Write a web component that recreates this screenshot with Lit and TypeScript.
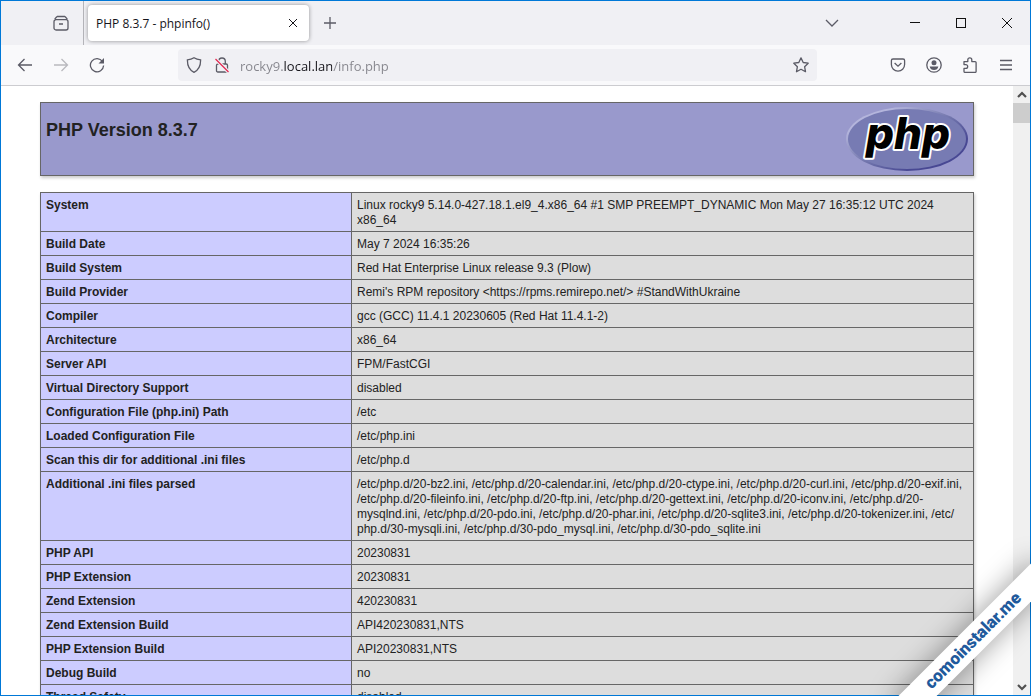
import { LitElement, html, css, svg } from "lit";
import { customElement } from "lit/decorators.js";

const ICONS = {
  archive: svg`<path d="M4 1.500h8M3 4.700h10a2 2 0 0 1 2 2V13a2 2 0 0 1-2 2H3a2 2 0 0 1-2-2V6.700a2 2 0 0 1 2-2zM1.700 4.200 4 1.500M14.300 4.200 12 1.500M6 9h4"/>`,
  close: svg`<path d="m4 4 8 8M12 4l-8 8" stroke-width="1"/>`,
  plus: svg`<path d="M8 2v12M2 8h12"/>`,
  chevron: svg`<path d="m2 5 6 6 6-6"/>`,
  minimize: svg`<path d="M3 7.500h10" shape-rendering="crispEdges"/>`,
  maximize: svg`<path d="M3.500 3.500h9v9h-9z" shape-rendering="crispEdges"/>`,
  closeWindow: svg`<path d="m3 3 10 10M13 3 3 13"/>`,
  back: svg`<path d="M15 8H1.500M7.500 2 1.500 8l6 6"/>`,
  forward: svg`<path d="M1 8h13.500M8.500 2l6 6-6 6"/>`,
  reload: svg`<path d="M13.500 4.500A6.600 6.600 0 1 0 14.600 8.500"/><path d="M15 1v5.500H9.500z" fill="currentColor" stroke="none"/>`,
  shield: svg`<path d="M8 .8c2 1.300 4.300 1.900 6.600 2.100C14.700 8.500 13 13 8 15.300 3 13 1.300 8.500 1.400 2.900 3.700 2.700 6 2.100 8 .8z"/>`,
  lock: svg`<path d="M4.700 7V4.300a3.300 3.300 0 0 1 6.600 0V7M3.800 7h8.400a1.300 1.300 0 0 1 1.300 1.300V13.700a1.300 1.300 0 0 1-1.300 1.300H3.800a1.300 1.300 0 0 1-1.300-1.300V8.300A1.300 1.300 0 0 1 3.800 7z"/><path d="m1.500 2 13 13" stroke="#f0f0f4" stroke-width="3.500"/><path d="m1.500 2 13 13" stroke="#e22850"/>`,
  star: svg`<path d="m8 .9 2.200 4.600 5 .7-3.600 3.500.9 5L8 12.300l-4.500 2.400.9-5L.8 6.200l5-.7z" stroke-linejoin="round"/>`,
  pocket: svg`<path d="M3 2h10a1.600 1.600 0 0 1 1.600 1.600V7.500a6.600 6.600 0 0 1-13.200 0V3.600A1.600 1.600 0 0 1 3 2z"/><path d="m4.600 6 3.400 3.200L11.400 6"/>`,
  account: svg`<circle cx="8" cy="8" r="7.200"/><circle cx="8" cy="5.800" r="2.500" fill="currentColor" stroke="none"/><path d="M3.700 9.500h8.600c-.3 2.300-2 3.600-4.300 3.600s-4-1.300-4.300-3.600z" fill="currentColor" stroke="none"/>`,
  puzzle: svg`<path d="M2 4.600h3.800V2.800a2 2 0 0 1 4 0v1.800h3.300a1 1 0 0 1 1 1v8.800a1 1 0 0 1-1 1H3a1 1 0 0 1-1-1v-3h1.800a1.900 1.900 0 0 0 0-3.800H2z" stroke-linejoin="round"/>`,
  menu: svg`<path d="M2 3.500h12M2 8h12M2 12.500h12"/>`,
  arrowUp: svg`<path d="m4 10 4-4 4 4" stroke-width="2.200"/>`,
  arrowDown: svg`<path d="m4 6 4 4 4-4" stroke-width="2.200"/>`,
};

function icon(name: keyof typeof ICONS) {
  return html`<svg viewBox="0 0 16 16" width="16" height="16" fill="none" stroke="currentColor" stroke-width="1.3" aria-hidden="true">${ICONS[name]}</svg>`;
}

const INI_FILES = [
  "20-bz2", "20-calendar", "20-ctype", "20-curl", "20-exif", "20-fileinfo", "20-ftp",
  "20-gettext", "20-iconv", "20-mysqlnd", "20-pdo", "20-phar", "20-sqlite3",
  "20-tokenizer", "30-mysqli", "30-pdo_mysql", "30-pdo_sqlite",
];

const ROWS: [string, string][] = [
  ["System", "Linux rocky9 5.14.0-427.18.1.el9_4.x86_64 #1 SMP PREEMPT_DYNAMIC Mon May 27 16:35:12 UTC 2024 x86_64"],
  ["Build Date", "May 7 2024 16:35:26"],
  ["Build System", "Red Hat Enterprise Linux release 9.3 (Plow)"],
  ["Build Provider", "Remi's RPM repository <https://rpms.remirepo.net/> #StandWithUkraine"],
  ["Compiler", "gcc (GCC) 11.4.1 20230605 (Red Hat 11.4.1-2)"],
  ["Architecture", "x86_64"],
  ["Server API", "FPM/FastCGI"],
  ["Virtual Directory Support", "disabled"],
  ["Configuration File (php.ini) Path", "/etc"],
  ["Loaded Configuration File", "/etc/php.ini"],
  ["Scan this dir for additional .ini files", "/etc/php.d"],
  ["Additional .ini files parsed", INI_FILES.map((f) => `/etc/\u200bphp.d/${f}.ini`).join(", ")],
  ["PHP API", "20230831"],
  ["PHP Extension", "20230831"],
  ["Zend Extension", "420230831"],
  ["Zend Extension Build", "API420230831,NTS"],
  ["PHP Extension Build", "API20230831,NTS"],
  ["Debug Build", "no"],
  ["Thread Safety", "disabled"],
];

@customElement("browser-chrome")
export class BrowserChrome extends LitElement {
  static styles = css`
    :host {
      display: block;
      font-family: "Open Sans", "Noto Sans", sans-serif;
      color: #5b5b66;
    }
    button {
      display: grid;
      place-items: center;
      width: 32px;
      height: 32px;
      padding: 0;
      border: 0;
      background: none;
      color: inherit;
      font: inherit;
      flex: none;
    }
    button:disabled { color: #b9b9be; }
    svg { display: block; }
    .tabs {
      display: flex;
      align-items: center;
      height: 44px;
      padding-left: 44px;
      background: #f0f0f4;
    }
    .divider {
      width: 1px;
      align-self: stretch;
      margin: 0 4px 0 6px;
      background: #b4b4b9;
    }
    .tab {
      display: flex;
      align-items: center;
      flex: 0 1 221px;
      height: 36px;
      box-sizing: border-box;
      padding-right: 4px;
      border-radius: 4px;
      background: #fff;
      box-shadow: 0 0 4px rgba(0, 0, 0, 0.4);
      color: #15141a;
    }
    .tab .title {
      flex: 1;
      height: 36px;
      padding-left: 8px;
      text-align: left;
      justify-items: start;
      font-size: 12px;
      white-space: nowrap;
    }
    .tab .dismiss { width: 24px; height: 24px; }
    .add { margin-left: 5px; }
    .list { margin: 0 44px 0 auto; }
    .window { width: 46px; height: 44px; color: #111; }
    .window svg { stroke-width: 1; }
    .toolbar {
      display: flex;
      align-items: center;
      gap: 4px;
      height: 40px;
      padding: 0 8px;
      background: #f9f9fb;
      border-bottom: 1px solid #ccccd0;
    }
    .address {
      display: flex;
      align-items: center;
      flex: 1;
      min-width: 0;
      height: 32px;
      box-sizing: border-box;
      margin: 0 61px;
      padding: 0 2px;
      border-radius: 4px;
      background: #f0f0f4;
    }
    .address button { width: 28px; }
    .address input {
      flex: 1;
      min-width: 0;
      box-sizing: border-box;
      height: 32px;
      margin-left: 4px;
      padding: 2px 0 0;
      border: 0;
      outline: 0;
      font: inherit;
      font-size: 13px;
      color: transparent;
      background: linear-gradient(90deg, #85858c 44px, #15141a 44px 92px, #85858c 92px);
      -webkit-background-clip: text;
      background-clip: text;
    }
  `;

  render() {
    return html`
      <div class="tabs">
        <button aria-label="View recent browsing">${icon("archive")}</button>
        <span class="divider"></span>
        <div class="tab">
          <button class="title">PHP 8.3.7 - phpinfo()</button>
          <button class="dismiss" aria-label="Close tab">${icon("close")}</button>
        </div>
        <button class="add" aria-label="New tab">${icon("plus")}</button>
        <button class="list" aria-label="List all tabs">${icon("chevron")}</button>
        <button class="window" aria-label="Minimize">${icon("minimize")}</button>
        <button class="window" aria-label="Maximize">${icon("maximize")}</button>
        <button class="window" aria-label="Close window">${icon("closeWindow")}</button>
      </div>
      <div class="toolbar">
        <button aria-label="Back">${icon("back")}</button>
        <button aria-label="Forward" disabled>${icon("forward")}</button>
        <button aria-label="Reload">${icon("reload")}</button>
        <div class="address">
          <button aria-label="Tracking protection">${icon("shield")}</button>
          <button aria-label="Connection not secure">${icon("lock")}</button>
          <input aria-label="Address" value="rocky9.local.lan/info.php" spellcheck="false" />
          <button aria-label="Bookmark this page">${icon("star")}</button>
        </div>
        <button aria-label="Save to Pocket">${icon("pocket")}</button>
        <button aria-label="Account">${icon("account")}</button>
        <button aria-label="Extensions">${icon("puzzle")}</button>
        <button aria-label="Menu">${icon("menu")}</button>
      </div>
    `;
  }
}

@customElement("php-info")
export class PhpInfo extends LitElement {
  static styles = css`
    :host {
      display: block;
      font-family: "Liberation Sans", Arial, sans-serif;
      font-size: 12px;
      line-height: 15px;
      color: #222;
    }
    .page {
      max-width: 934px;
      margin: 0 auto;
      padding: 16px 0;
    }
    .banner {
      display: flex;
      justify-content: space-between;
      box-sizing: border-box;
      height: 74px;
      margin-bottom: 16px;
      padding: 4px 5px;
      border: 1px solid #666;
      background: #9999cc;
      box-shadow: 1px 2px 3px #ccc;
    }
    h1 {
      margin: 12px 0 0;
      font-size: 18px;
      line-height: 22px;
    }
    .logo { display: block; }
    .logo text {
      font-family: Inter, "Liberation Sans", sans-serif;
      font-weight: 800;
      font-style: italic;
      font-size: 44px;
      paint-order: stroke;
      stroke: #fff;
      stroke-width: 4px;
      stroke-linejoin: round;
    }
    table {
      width: 100%;
      border-collapse: collapse;
      box-shadow: 1px 2px 3px #ccc;
    }
    th, td {
      padding: 5px 5px 3px;
      border: 1px solid #666;
      text-align: left;
      vertical-align: top;
    }
    th {
      width: 300px;
      background: #ccccff;
    }
    td {
      background: #ddd;
      overflow-wrap: anywhere;
    }
  `;

  render() {
    return html`
      <div class="page">
        <header class="banner">
          <h1>PHP Version 8.3.7</h1>
          <svg class="logo" width="122" height="64" viewBox="0 0 122 64" role="img" aria-label="PHP logo">
            <defs>
              <linearGradient id="rim" x1="0" y1="0" x2="1" y2="1">
                <stop offset="0.2" stop-color="#b4b5dc" />
                <stop offset="0.5" stop-color="#7377ad" />
                <stop offset="0.75" stop-color="#484893" />
              </linearGradient>
            </defs>
            <ellipse cx="61" cy="32" rx="61" ry="32" fill="url(#rim)" />
            <ellipse cx="61" cy="32" rx="59" ry="30" fill="#777bb3" />
            <text x="20" y="42">php</text>
          </svg>
        </header>
        <table>
          <tbody>
            ${ROWS.map(([name, value]) => html`<tr><th scope="row">${name}</th><td>${value}</td></tr>`)}
          </tbody>
        </table>
      </div>
    `;
  }
}

@customElement("app-root")
export class AppRoot extends LitElement {
  static styles = css`
    :host {
      display: block;
      position: relative;
      height: 100vh;
      overflow: hidden;
      background: #fff;
    }
    .frame {
      display: flex;
      flex-direction: column;
      box-sizing: border-box;
      height: 100%;
      border: 1px solid #0078d7;
    }
    .view {
      display: flex;
      flex: 1;
      min-height: 0;
    }
    main {
      flex: 1;
      min-width: 0;
      overflow: hidden;
    }
    .scroll {
      display: flex;
      flex-direction: column;
      width: 17px;
      background: #f0f0f0;
      color: #505050;
    }
    .scroll button {
      display: grid;
      place-items: center;
      width: 17px;
      height: 17px;
      padding: 0;
      border: 0;
      background: none;
      color: inherit;
    }
    .track { flex: 1; }
    .thumb { height: 20px; background: #cdcdcd; }
    .ribbon {
      position: absolute;
      right: -42px;
      bottom: 42px;
      width: 200px;
      height: 27px;
      transform: rotate(-45deg);
      background: #fff;
      box-shadow: 0 0 28px rgba(0, 0, 0, 0.4);
      color: #1f5a9c;
      font: 900 17px/27px Roboto, sans-serif;
      text-align: center;
      text-decoration: none;
    }
  `;

  render() {
    return html`
      <div class="frame">
        <browser-chrome></browser-chrome>
        <div class="view">
          <main><php-info></php-info></main>
          <div class="scroll">
            <button aria-label="Scroll up">${icon("arrowUp")}</button>
            <div class="track"><div class="thumb"></div></div>
            <button aria-label="Scroll down">${icon("arrowDown")}</button>
          </div>
        </div>
      </div>
      <a class="ribbon" href="#">comoinstalar.me</a>
    `;
  }
}
